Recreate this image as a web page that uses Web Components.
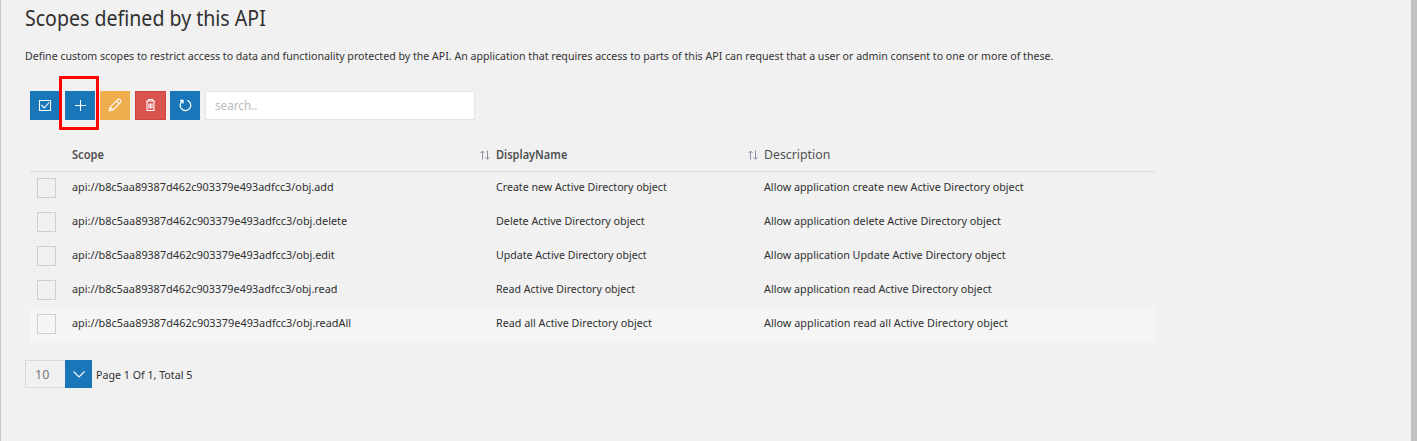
<!DOCTYPE html>
<html lang="en"><head><meta charset="utf-8"><title>Scopes</title>
<style>
html,body{margin:0;height:100%;overflow:hidden;background:#f1f1f1}
body{font-family:"Noto Sans","Open Sans",sans-serif;color:#333}
</style></head><body>
<scope-page></scope-page>
<script>
const define=(name,html,init)=>customElements.define(name,class extends HTMLElement{
  constructor(){super();this.attachShadow({mode:'open'}).innerHTML=html}
  connectedCallback(){if(init)init.call(this,this.shadowRoot)}
});

// One line of text, condensed horizontally to the width given in "w".
define('fit-text',`<style>:host{display:block;white-space:nowrap}span{display:inline-block;transform-origin:0 50%}</style><span><slot></slot></span>`,function(r){
  const s=r.querySelector('span'),w=+this.getAttribute('w');
  if(w)s.style.transform=`scaleX(${w/s.offsetWidth})`;
});

const icons={
  check:'<path d="M2.5 3.5h11v10h-11zM4.500 8l2.800 3L12 5.500"/>',
  plus:'<path d="M8.500 3v11M3 8.500h11"/>',
  pencil:'<path d="M2.2 13.800l.9-3.600 7.600-7.600q1.200-1 2.300 0l.5.5q1 1.100 0 2.200L5.800 12.900zM9.500 4l2.600 2.600M3.200 10.300l2.600 2.600"/>',
  trash:'<path d="M3 4h9M5.500 3.500v-1h4v1M4 4.500v9h7v-9M6 6.500v5M7.500 6.500v5M9 6.500v5"/>',
  refresh:'<path stroke-width="1.300" d="M5.800 3.700A5.300 5.300 0 1 0 10.300 3.300M3 3.500h3v3"/>',
  down:'<path d="M2.500 5.500L8 11l5.500-5.500"/>',
  sort:'<path d="M5.500 12.500V4M3.500 6L5.500 4l2 2M10.500 3.500V12M8.500 10.300l2 2 2-2"/>'
};
define('line-icon',`<style>:host{display:block;width:16px;height:16px}svg{display:block;fill:none;stroke:currentColor;stroke-width:var(--sw,1.1)}</style><svg width="16" height="16" viewBox="0 0 16 16"></svg>`,function(r){
  r.querySelector('svg').innerHTML=icons[this.getAttribute('name')];
});

define('tool-button',`<style>
:host{display:flex;box-sizing:border-box;width:30px;height:29px;padding-bottom:1px;align-items:center;justify-content:center;position:relative;background:#1976b8;color:#fff}
:host([kind=edit]){background:#f0ad4e}
:host([kind=remove]){background:#d9534f;border:1px solid #cf423e;width:31px;margin-right:-1px}
:host([marked])::after{content:"";position:absolute;left:-6px;top:-15px;width:34px;height:48px;border:3px solid #f00;border-radius:1px;z-index:1}
</style><slot></slot>`);

define('search-box',`<style>
:host{display:block;box-sizing:border-box;width:270px;height:29px;border:1px solid #e4e4e4;background:#fff;padding:0 9px;font-size:12.500px;line-height:27px;color:#b9b9b9}
</style><fit-text w="42">search..</fit-text>`);

define('tool-bar',`<style>:host{display:flex;gap:5px}</style>
<tool-button><line-icon name="check"></line-icon></tool-button>
<tool-button marked><line-icon name="plus"></line-icon></tool-button>
<tool-button kind="edit"><line-icon name="pencil"></line-icon></tool-button>
<tool-button kind="remove"><line-icon name="trash"></line-icon></tool-button>
<tool-button><line-icon name="refresh"></line-icon></tool-button>
<search-box></search-box>`);

define('scope-row',`<style>
:host{display:grid;grid-template-columns:42px 424px 268px 1fr;height:34px;align-items:start;font-size:11px;line-height:16px;color:#303030}
:host([hover]){background:#f5f5f5}
i{box-sizing:border-box;width:19px;height:20px;margin:6px 0 0 7px;border:1px solid #d2cec9}
fit-text{margin-top:7px}
</style><i></i><fit-text></fit-text><fit-text></fit-text><fit-text></fit-text>`);

const rows=[
 ['add',262,'Create new Active Directory object',171,'Allow application create new Active Directory object',260],
 ['delete',275,'Delete Active Directory object',148.5,'Allow application delete Active Directory object',236.5],
 ['edit',263,'Update Active Directory object',151,'Allow application Update Active Directory object',241.5],
 ['read',265,'Read Active Directory object',139.5,'Allow application read Active Directory object',228],
 ['readAll',279,'Read all Active Directory object',155.5,'Allow application read all Active Directory object',243.5]];

customElements.define('scope-table',class extends HTMLElement{
  connectedCallback(){
    const r=this.attachShadow({mode:'open'});
    r.innerHTML=`<style>
:host{display:block;width:1125px}
header{box-sizing:border-box;display:grid;grid-template-columns:42px 407px 17px 251px 17px 1fr;height:33px;align-items:center;border-bottom:1px solid #d9d9d9;font-size:12.500px;line-height:18px;color:#505050}
header fit-text{margin-top:-1px}
header .b{font-size:11.800px;font-weight:600;color:#505050;margin-top:-3px}
line-icon{color:#8b90a5;margin-left:-2px;--sw:1}
</style><header><span></span><fit-text class="b" w="32">Scope</fit-text><line-icon name="sort"></line-icon><fit-text class="b" w="71">DisplayName</fit-text><line-icon name="sort"></line-icon><fit-text w="66">Description</fit-text></header>`;
    rows.forEach((d,i)=>{
      const row=document.createElement('scope-row');
      if(i===4)row.setAttribute('hover','');
      const c=row.shadowRoot.querySelectorAll('fit-text');
      [['api://b8c5aa89387d462c903379e493adfcc3/obj.'+d[0],d[1]],[d[2],d[3]],[d[4],d[5]]].forEach(([t,w],k)=>{
        c[k].textContent=t;c[k].setAttribute('w',w);
      });
      r.append(row);
    });
  }
});

define('page-nav',`<style>
:host{display:flex;height:28px;align-items:center;font-size:11px;color:#303030}
.n{box-sizing:border-box;width:40px;height:28px;border:1px solid #d9d9d9;border-right:0;padding-left:9px;font-size:12.500px;line-height:27px;color:#777}
.d{display:flex;width:27px;height:28px;align-items:center;justify-content:center;background:#1976b8;color:#fff;margin-right:4px}
</style><fit-text class="n" w="14">10</fit-text><div class="d"><line-icon name="down"></line-icon></div><fit-text w="96">Page 1 Of 1, Total 5</fit-text>`);

define('scope-page',`<style>
:host{display:block;box-sizing:border-box;height:441px;border-left:1px solid #c9c9c9;border-right:6px solid #c1c1c1;padding:3px 0 0 24px}
.h{font-size:21.500px;line-height:30px;color:#303030}
.p{font-size:11px;line-height:16px;margin:15px 0 0}
tool-bar{margin:27px 0 0 5px}
scope-table{margin:19px 0 0 5px}
page-nav{margin-top:18px}
</style>
<fit-text class="h" w="241">Scopes defined by this API</fit-text>
<fit-text class="p" w="1028.5">Define custom scopes to restrict access to data and functionality protected by the API. An application that requires access to parts of this API can request that a user or admin consent to one or more of these.</fit-text>
<tool-bar></tool-bar><scope-table></scope-table><page-nav></page-nav>`);
</script></body></html>
